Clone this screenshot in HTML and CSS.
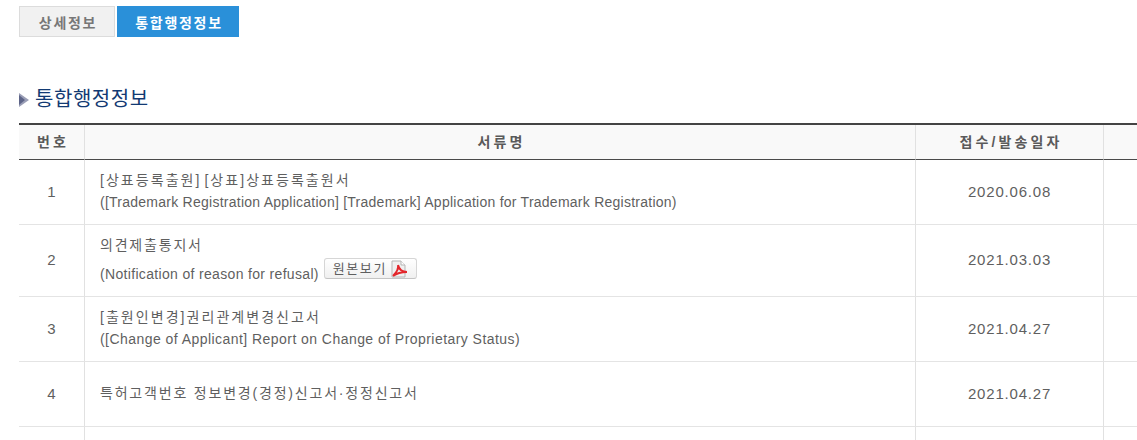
FILE: index.html
```html
<!DOCTYPE html>
<html lang="ko">
<head>
<meta charset="utf-8">
<title>통합행정정보</title>
<link rel="stylesheet" href="styles.css">
</head>
<body>
<div class="tabs">
  <a class="tab">상세정보</a>
  <a class="tab active">통합행정정보</a>
</div>
<h2 class="title"><svg class="arrow" width="10" height="14" viewBox="0 0 10 14"><path d="M0 0L10 7L0 14Z" fill="#9a9eb6"/><path d="M0 2L6 7L0 12Z" fill="#5d6488"/></svg>통합행정정보</h2>
<table class="grid">
  <colgroup><col class="c1"><col class="c2"><col class="c3"><col class="c4"></colgroup>
  <thead>
    <tr><th>번호</th><th>서류명</th><th>접수/발송일자</th><th></th></tr>
  </thead>
  <tbody>
    <tr class="r1">
      <td class="num">1</td>
      <td class="doc"><div class="ko bracket">[상표등록출원] [상표]상표등록출원서</div><div class="en">([Trademark Registration Application] [Trademark] Application for Trademark Registration)</div></td>
      <td class="date">2020.06.08</td><td></td>
    </tr>
    <tr class="r2">
      <td class="num">2</td>
      <td class="doc"><div class="ko">의견제출통지서</div><div class="en second">(Notification of reason for refusal)<a class="btn">원본보기<svg width="18" height="18" viewBox="0 0 18 18"><path d="M2 1H11L15 5V17H2Z" fill="#f0f0f0" stroke="#b5b5b5"/><path d="M11 1V5H15" fill="#fff" stroke="#b5b5b5"/><path d="M3 16C6 13 9 9 8 5C9 9 12 12 17 12C12 12 7 13 3 16Z" fill="none" stroke="#e3262b" stroke-width="2"/></svg></a></div></td>
      <td class="date">2021.03.03</td><td></td>
    </tr>
    <tr class="r3">
      <td class="num">3</td>
      <td class="doc"><div class="ko bracket">[출원인변경]권리관계변경신고서</div><div class="en wide">([Change of Applicant] Report on Change of Proprietary Status)</div></td>
      <td class="date">2021.04.27</td><td></td>
    </tr>
    <tr class="r3">
      <td class="num">4</td>
      <td class="doc"><div class="ko">특허고객번호 정보변경(경정)신고서·정정신고서</div></td>
      <td class="date">2021.04.27</td><td></td>
    </tr>
    <tr class="r3"><td></td><td></td><td></td><td></td></tr>
  </tbody>
</table>
</body>
</html>
```

FILE: styles.css
```css
html, body { margin: 0; padding: 0; background: #fff; overflow: hidden; height: 440px; }
body { padding-left: 19px; padding-top: 6px; box-sizing: border-box; font-family: "Liberation Sans", "Noto Sans CJK KR", sans-serif; font-size: 14px; color: #5f5f5f; }
.tabs { display: flex; gap: 2px; height: 31px; }
.tab { box-sizing: border-box; height: 31px; padding-left: 2px; display: flex; align-items: center; justify-content: center; font-weight: bold; font-size: 14px; letter-spacing: 1.7px; }
.tab:first-child { width: 96px; background: #f1f1f1; border: 1px solid #dcdcdc; color: #777; }
.tab.active { width: 122px; background: #2a90d9; color: #fff; }
.title { margin: 48px 0 0; height: 38px; display: flex; align-items: flex-start; font-weight: normal; font-size: 20px; line-height: 28px; color: #123a73; letter-spacing: 0.55px; }
.arrow { margin: 8px 6px 0 0; flex: none; }
.grid { border-collapse: separate; border-spacing: 0; table-layout: fixed; width: 1118px; border-top: 2px solid #444; }
.c1 { width: 66px; } .c2 { width: 831px; } .c3 { width: 188px; } .c4 { width: 33px; }
th { height: 32px; padding: 0 0 2px 3px; background: #f9f9f9; border-bottom: 1px solid #4a4a4a; border-right: 1px solid #e1e1e1; color: #5a5a5a; font-size: 14px; font-weight: bold; letter-spacing: 3.1px; text-align: center; }
td { padding: 0 0 2px; border-bottom: 1px solid #e4e4e4; border-right: 1px solid #e1e1e1; vertical-align: middle; color: #5f5f5f; }
th:last-child, td:last-child { border-right: 0; }
.r1 td { height: 62px; } .r2 td { height: 69px; } .r3 td { height: 62px; }
.num, .date { text-align: center; font-size: 15px; }
.date { letter-spacing: 0.8px; }
td.doc { padding-left: 15px; }
.ko { line-height: 22px; letter-spacing: 1.8px; }
.ko.bracket { letter-spacing: 2.05px; word-spacing: -3px; }
.en { line-height: 22px; letter-spacing: 0.25px; }
.en.wide { letter-spacing: 0.45px; }
.second { margin-top: 7px; display: flex; align-items: flex-start; letter-spacing: 0.33px; }
.btn { box-sizing: border-box; height: 21px; width: 93px; margin: -5px 0 0 5px; display: flex; align-items: center; justify-content: center; gap: 3px; border: 1px solid #d6d6d6; border-bottom-color: #c4c4c4; border-radius: 3px; background: linear-gradient(#fff, #f0f0f0); color: #5f5f5f; font-size: 13px; line-height: 18px; letter-spacing: 1.6px; }
```
